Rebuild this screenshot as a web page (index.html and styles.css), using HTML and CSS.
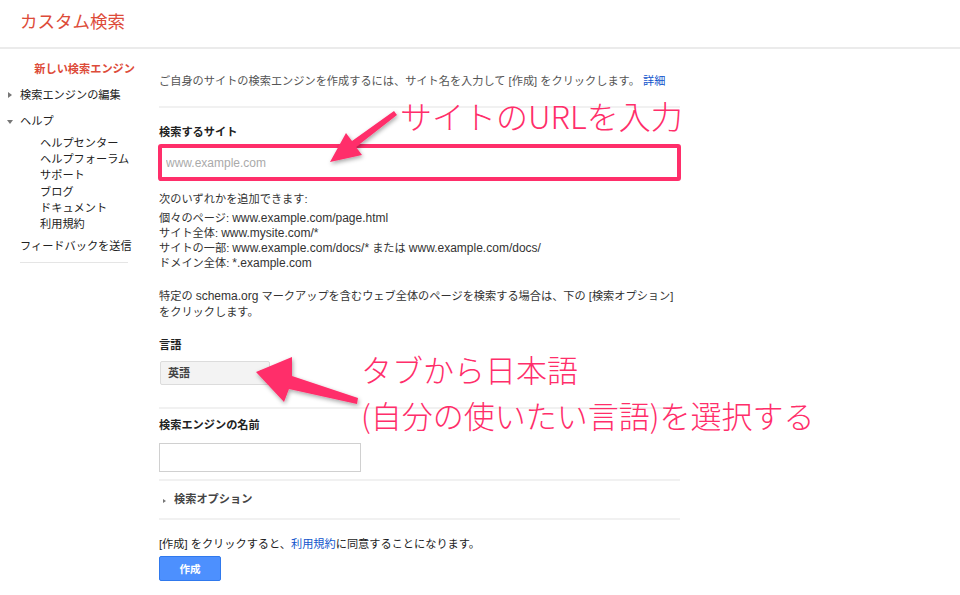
FILE: index.html
```html
<!DOCTYPE html>
<html lang="ja">
<head>
  <meta charset="utf-8">
  <title>カスタム検索</title>
  <link rel="stylesheet" href="styles.css">
</head>
<body>
  <div class="header">
    <p class="logo">カスタム検索</p>
  </div>
  <div class="page">
    <div class="sidebar">
      <p class="side-new">新しい検索エンジン</p>
      <p class="side-item closed">検索エンジンの編集</p>
      <p class="side-item open">ヘルプ</p>
      <ul class="side-sub">
        <li>ヘルプセンター</li>
        <li>ヘルプフォーラム</li>
        <li>サポート</li>
        <li>ブログ</li>
        <li>ドキュメント</li>
        <li>利用規約</li>
      </ul>
      <p class="side-feedback">フィードバックを送信</p>
      <div class="side-line"></div>
    </div>

    <div class="main">
      <p class="intro">ご自身のサイトの検索エンジンを作成するには、サイト名を入力して [作成] をクリックします。 <a class="link" href="#">詳細</a></p>
      <div class="divider first"></div>

      <p class="label site-label">検索するサイト</p>
      <div class="highlight">
        <input class="site-input" type="text" placeholder="www.example.com">
      </div>

      <p class="note">次のいずれかを追加できます:</p>
      <div class="examples">
        <p>個々のページ: <span class="latin">www.example.com/page.html</span></p>
        <p>サイト全体: <span class="latin">www.mysite.com/*</span></p>
        <p>サイトの一部: <span class="latin">www.example.com/docs/*</span> または <span class="latin">www.example.com/docs/</span></p>
        <p>ドメイン全体: <span class="latin">*.example.com</span></p>
      </div>
      <p class="schema"><span class="nowrap">特定の <span class="latin">schema.org</span> マークアップを含むウェブ全体のページを検索する場合は、下の [検索オプション]</span><br>をクリックします。</p>

      <p class="label lang-label">言語</p>
      <div class="select">英語<span class="select-arrow"></span></div>
      <div class="divider lang-div"></div>

      <p class="label name-label">検索エンジンの名前</p>
      <input class="name-input" type="text">
      <div class="divider name-div"></div>

      <p class="options"><span class="opt-arrow"></span>検索オプション</p>
      <div class="divider opt-div"></div>

      <p class="terms">[作成] をクリックすると、<a class="link" href="#">利用規約</a>に同意することになります。</p>
      <button class="create-btn">作成</button>
    </div>
  </div>

  <svg class="arrows" width="960" height="595" viewBox="0 0 960 595">
    <defs>
      <filter id="shadow" x="-20%" y="-20%" width="140%" height="140%">
        <feDropShadow dx="1" dy="2" stdDeviation="2" flood-color="#000" flood-opacity="0.35"/>
      </filter>
    </defs>
    <polygon filter="url(#shadow)" fill="#ff2e6a"
      points="330,162 346,133 352,141 394,111 397,115 356,147 362,155"/>
    <polygon filter="url(#shadow)" fill="#ff2e6a"
      points="256,372 292,357 292,376 358,398 357,404 289,389 284,402"/>
  </svg>
  <p class="note-url">サイトのURLを入力</p>
  <p class="note-lang">タブから日本語<br>(自分の使いたい言語)を選択する</p>
</body>
</html>
```

FILE: styles.css
```css
body {
  margin: 0;
  background: #fff;
  color: #222;
  font-family: "Liberation Sans", Arial, "Noto Sans CJK JP", sans-serif;
  font-size: 11.2px;
  position: relative;
  width: 960px;
  height: 595px;
  overflow: hidden;
}
p {
  margin: 0;
  line-height: 16px;
}
.latin {
  font-family: "Liberation Sans", Arial, sans-serif;
  font-size: 12px;
  line-height: 1;
}
.nowrap {
  white-space: nowrap;
}
.link {
  color: #1155cc;
  text-decoration: none;
}

.header {
  height: 47px;
  border-bottom: 2px solid #ebebeb;
}
.logo {
  padding: 11px 0 0 20px;
  font-size: 17.5px;
  line-height: 22px;
  color: #dd4b39;
}

.page {
  display: flex;
}
.sidebar {
  width: 150px;
  padding-top: 12px;
}
.side-new {
  color: #dd4b39;
  font-weight: bold;
  text-align: right;
  padding-right: 15px;
}
.side-item {
  position: relative;
  padding-left: 20px;
  margin-top: 10px;
}
.side-item.closed::before {
  content: "";
  position: absolute;
  left: 8px;
  top: 5px;
  border-left: 4px solid #777;
  border-top: 3px solid transparent;
  border-bottom: 3px solid transparent;
}
.side-item.open::before {
  content: "";
  position: absolute;
  left: 7px;
  top: 7px;
  border-top: 4px solid #777;
  border-left: 3px solid transparent;
  border-right: 3px solid transparent;
}
.side-sub {
  list-style: none;
  margin: 6px 0 0;
  padding-left: 40px;
}
.side-sub li {
  line-height: 16.2px;
}
.side-feedback {
  padding-left: 20px;
  margin-top: 6px;
}
.side-line {
  margin: 8px 0 0 20px;
  width: 108px;
  height: 1px;
  background: #e5e5e5;
}

.main {
  width: 521px;
  margin-left: 9px;
  padding-top: 24px;
}
.intro {
  color: #555;
}
.divider {
  height: 2px;
  background: #f1f1f1;
}
.divider.first {
  margin-top: 17px;
}
.label {
  font-weight: bold;
  color: #222;
}
.site-label {
  margin-top: 16px;
}
.highlight {
  margin: 4px 0 0 -1px;
  border: 4px solid #ff2e6a;
  border-radius: 3px;
  background: #fff;
  height: 29px;
  width: 515px;
}
.site-input {
  box-sizing: border-box;
  width: 100%;
  height: 29px;
  border: none;
  padding: 0 4px;
  font-family: "Liberation Sans", Arial, sans-serif;
  font-size: 12px;
  outline: none;
}
.site-input::placeholder {
  color: #aaa;
}
.note {
  margin-top: 10px;
  color: #333;
}
.examples {
  margin-top: 4px;
  color: #333;
}
.examples p {
  line-height: 15px;
}
.schema {
  margin-top: 17px;
  color: #333;
}
.lang-label {
  margin-top: 17px;
}
.select {
  position: relative;
  box-sizing: border-box;
  margin: 8px 0 0 1px;
  width: 110px;
  height: 24px;
  padding: 0 7px;
  line-height: 22px;
  font-size: 11px;
  font-weight: bold;
  color: #444;
  background: #f3f3f3;
  border: 1px solid #dcdcdc;
  border-radius: 2px;
}
.select-arrow {
  position: absolute;
  right: 5px;
  top: 8px;
  border-bottom: 4px solid #555;
  border-left: 3px solid transparent;
  border-right: 3px solid transparent;
}
.lang-div {
  margin-top: 22px;
}
.name-label {
  margin-top: 8px;
}
.name-input {
  display: block;
  box-sizing: border-box;
  margin-top: 10px;
  width: 202px;
  height: 29px;
  border: 1px solid #d0d0d0;
}
.name-div {
  margin-top: 7px;
}
.options {
  position: relative;
  margin-top: 10px;
  padding-left: 15px;
  font-weight: bold;
  color: #444;
}
.opt-arrow {
  position: absolute;
  left: 4px;
  top: 8px;
  border-left: 3px solid #777;
  border-top: 2.5px solid transparent;
  border-bottom: 2.5px solid transparent;
}
.opt-div {
  margin-top: 11px;
}
.terms {
  margin-top: 16px;
  color: #222;
}
.create-btn {
  display: block;
  margin-top: 4px;
  width: 62px;
  height: 25px;
  border: 1px solid #3079ed;
  border-radius: 2px;
  background: #4d90fe;
  color: #fff;
  font-family: "Noto Sans CJK JP", sans-serif;
  font-size: 10.5px;
  font-weight: bold;
}

.arrows {
  position: absolute;
  left: 0;
  top: 0;
  pointer-events: none;
}
.note-url,
.note-lang {
  position: absolute;
  color: #ff2e6a;
  font-family: "Noto Sans CJK JP", sans-serif;
  font-weight: 300;
}
.note-url {
  left: 400px;
  top: 96px;
  font-size: 32px;
  line-height: 38px;
}
.note-lang {
  left: 361px;
  top: 346px;
  font-size: 31px;
  line-height: 46px;
}
```
